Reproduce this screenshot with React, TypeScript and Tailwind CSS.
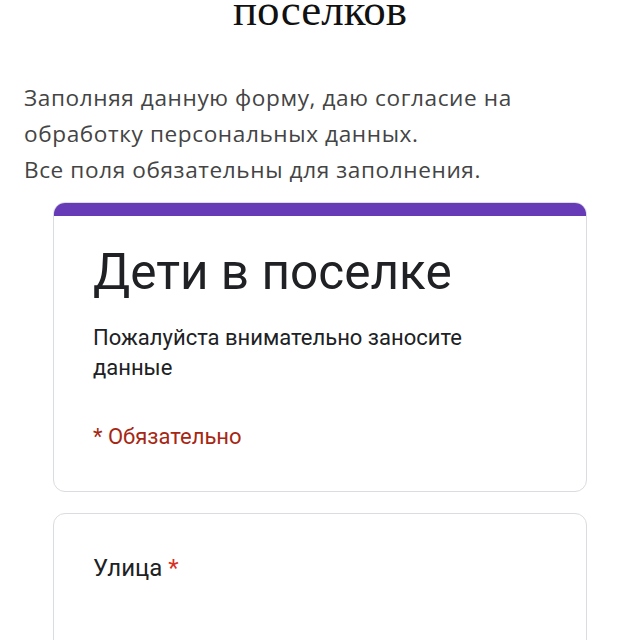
import React from "react";

export default function App() {
  return (
    <div className="w-[640px] h-[640px] overflow-hidden bg-white relative">
      <div className="-mt-[16px] text-center text-[45px] leading-[52px] text-[#111]" style={{ fontFamily: '"Liberation Serif", serif' }}>
        поселков
      </div>
      <div className="mt-[44px] px-[24px] w-[560px] text-[22.6px] leading-[36px] tracking-[0.6px] text-[#444]" style={{ fontFamily: '"Open Sans", sans-serif' }}>
        <p>Заполняя данную форму, даю согласие на обработку персональных данных.</p>
        <p>Все поля обязательны для заполнения.</p>
      </div>
      <div className="mx-[53px] mt-[14px] w-[534px] flex flex-col gap-[21px]" style={{ fontFamily: 'Roboto, sans-serif' }}>
        <div className="rounded-[12px] border border-[#dadce0] bg-white overflow-hidden">
          <div className="h-[14px] bg-[#673ab7] -mt-px -mx-px"></div>
          <div className="px-[39px] pt-[26px] pb-[39px]">
            <div className="text-[49.5px] leading-[60px] text-[#202124]">Дети в поселке</div>
            <div className="mt-[21px] text-[22px] leading-[30px] text-[#202124] w-[420px]">
              Пожалуйста внимательно заносите данные
            </div>
            <div className="mt-[39px] text-[22px] leading-[30px] text-[#a52714]">* Обязательно</div>
          </div>
        </div>
        <div className="rounded-[12px] border border-[#dadce0] bg-white h-[200px] px-[39px] pt-[38px]">
          <div className="text-[24px] leading-[32px] text-[#202124]">
            Улица <span className="text-[#d93025]">*</span>
          </div>
        </div>
      </div>
    </div>
  );
}
